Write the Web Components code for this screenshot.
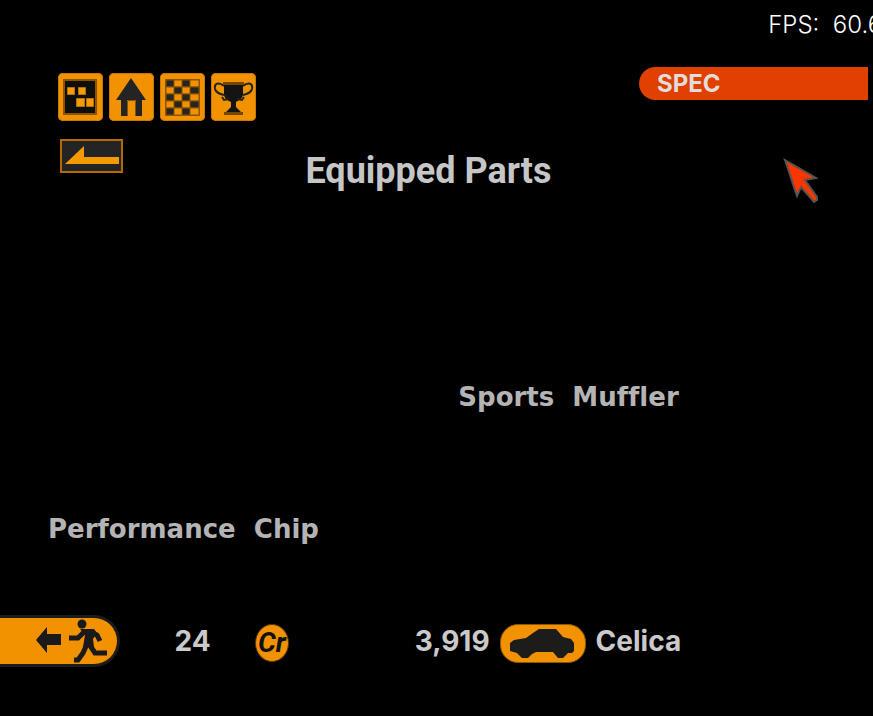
<!DOCTYPE html>
<html lang="en">
<head>
<meta charset="utf-8">
<title>Equipped Parts</title>
<style>
body { margin: 0; background: #000; color: #b4b4b4; font-family: Inter, "Liberation Sans", sans-serif; overflow: hidden; }
</style>
</head>
<body>
<parts-screen></parts-screen>
<script>
class BaseElement extends HTMLElement {
  connectedCallback() {
    if (this.shadowRoot) return;
    this.attachShadow({ mode: "open" }).innerHTML = this.render();
  }
}

const ICONS = {
  garage: `<rect x="5" y="6" width="34" height="36" fill="#8a5500"/><rect x="7" y="8" width="30" height="32" fill="#0e0e0c"/><path fill="#f59a08" stroke="#b87000" d="M9.500 14.500h7v7h-7zM20.500 14.500h7v7h-7zM18.500 25.500h8v8h-8zM28.500 25.500h7v8h-7z"/>`,
  home: `<path fill="#242424" d="M22 5 37 27H7zM12 27h6v16h-6zM27 27h6v16h-6z"/><path fill="none" stroke="#8a5500" d="M18.500 43V27.500h8V43"/>`,
  race: `<path fill="none" stroke="#8a5500" d="M5.500 6.500h34v36h-34z"/>` +
    [0,1,2,3,4].map(r => [0,1,2,3].map(c => `<rect x="${6 + c * 8}" y="${7 + r * 7}" width="9" height="7" fill="${(r + c) % 2 ? "#f29200" : "#252525"}" stroke="#8a5500" stroke-width="1"/>`).join("")).join(""),
  trophy: `<path fill="#141414" d="M13 10h19v12c-1 4-4 5-7 7v5l5 5v3H15v-3l5-5v-5c-4-2-6-3-7-7z"/><path fill="none" stroke="#242418" stroke-width="2" d="M13 13C7 8 3 11 4 16c1 4 5 5 9 6M32 13c6-5 10-2 9 3-1 4-5 5-9 6M11 24l2 3 5-1M33 24l-2 3-5-1"/><path fill="#744600" d="M12 9h21v3H12zM13 39h19v3H13z"/>`
};

customElements.define("frame-rate", class extends BaseElement {
  render() {
    return `<style>
      :host { display: block; height: 52px; line-height: 50px; font-size: 24px; font-weight: 300; color: #fff; white-space: pre; padding-left: 88%; overflow: hidden; }
    </style><slot></slot>`;
  }
});

customElements.define("nav-button", class extends BaseElement {
  render() {
    return `<style>
      :host { display: block; }
      button { display: block; width: 45px; height: 48px; padding: 0; border: 0; border-radius: 5px; background: #f29200; box-shadow: inset 0 0 0 1px #c87900; cursor: pointer; }
      svg { display: block; width: 45px; height: 48px; }
    </style><button type="button" aria-label="${this.getAttribute("label")}"><svg viewBox="0 0 45 48" aria-hidden="true">${ICONS[this.getAttribute("icon")]}</svg></button>`;
  }
});

customElements.define("section-tag", class extends BaseElement {
  render() {
    return `<style>
      :host { display: block; box-sizing: border-box; height: 33px; line-height: 33px; padding-left: 18px; border-radius: 17px 0 0 17px; background: #e04000; color: #e4dcd8; font-size: 24px; font-weight: 700; }
    </style><slot></slot>`;
  }
});

customElements.define("back-button", class extends BaseElement {
  render() {
    return `<style>
      :host { display: block; }
      button { display: block; box-sizing: border-box; width: 63px; height: 34px; padding: 0; border: 2px solid #b26b00; background: #242424; cursor: pointer; }
      svg { display: block; }
    </style><button type="button" aria-label="Back"><svg width="59" height="30" viewBox="0 0 59 30" aria-hidden="true"><path fill="#f59a00" d="M3 23 22 5v11h35v7H3z"/></svg></button>`;
  }
});

customElements.define("part-name", class extends BaseElement {
  render() {
    return `<style>
      :host { display: block; font: bold 26px/32px "DejaVu Sans", sans-serif; font-variant-ligatures: none; white-space: pre; }
    </style><slot></slot>`;
  }
});

customElements.define("exit-button", class extends BaseElement {
  render() {
    return `<style>
      :host { display: block; }
      button { display: block; box-sizing: border-box; width: 120px; height: 52px; padding: 0; border: 3px solid #1e1c1a; border-left: 0; border-radius: 0 26px 26px 0; background: #f29200; cursor: pointer; }
      svg { display: block; }
    </style><button type="button" aria-label="Exit"><svg width="117" height="46" viewBox="0 0 117 46" aria-hidden="true" fill="#1a1a1a">
      <path d="M36 22 47 9v7h14v11H47v8z"/>
      <circle cx="82" cy="6" r="4.500"/>
      <path d="M80 11h14l3 4-4 6 1 8H83l2-12z"/>
      <path fill="none" stroke="#1a1a1a" stroke-width="5" d="M69 20h9l6-6M91 14l6 3 3 6M87 26l-4 9-5 7h-4M89 26l6 9h12"/>
    </svg></button>`;
  }
});

customElements.define("credit-icon", class extends BaseElement {
  render() {
    return `<style>
      :host { display: grid; place-items: center; box-sizing: border-box; width: 34px; height: 38px; border: 1px solid #5d3800; border-radius: 50%; background: #f29200; color: #111; font: italic 700 28px/36px Roboto, "Liberation Sans", sans-serif; }
    </style><slot></slot>`;
  }
});

customElements.define("car-icon", class extends BaseElement {
  render() {
    return `<style>
      :host { display: block; }
      button { display: block; box-sizing: border-box; width: 86px; height: 39px; padding: 0; border: 1px solid #8a5500; border-radius: 18px; background: #f29200; cursor: pointer; }
      svg { display: block; }
    </style><button type="button" aria-label="Car"><svg width="84" height="37" viewBox="0 0 84 37" aria-hidden="true"><path fill="#1c1c1a" d="M9 18l4-3 12-2 7-5 6-4h17l7 8 8 2 3 4v8l-2 2h-4l-5 5h-5l-5-6H35l-4 2-4 4h-6l-5-5-7-2z"/></svg></button>`;
  }
});

customElements.define("mouse-pointer", class extends BaseElement {
  render() {
    return `<style>
      :host { position: absolute; left: 90%; top: 157px; pointer-events: none; }
      svg { display: block; margin-left: -3px; }
    </style><svg width="37" height="48" viewBox="0 0 37 48" aria-hidden="true"><path fill="#fa3600" stroke="#55534f" stroke-width="2" d="M2 3 33 21l-11 2 12 17v3l-3 2-13-15-4 9z"/></svg>`;
  }
});

customElements.define("status-bar", class extends BaseElement {
  render() {
    return `<style>
      :host { display: grid; grid-template-columns: 20% 27.500% 1fr; align-items: center; height: 52px; font-size: 28px; line-height: 32px; font-weight: 700; color: #cacaca; }
      .day { display: flex; align-items: center; gap: 44px; }
      .money { display: flex; align-items: center; gap: 10px; }
      credit-icon, car-icon { margin-top: 4px; }
    </style>
    <exit-button></exit-button>
    <div class="day"><span>24</span><credit-icon>Cr</credit-icon></div>
    <div class="money"><span>3,919</span><car-icon></car-icon><span>Celica</span></div>`;
  }
});

customElements.define("parts-screen", class extends BaseElement {
  render() {
    return `<style>
      :host { display: block; position: relative; min-height: 100vh; overflow: hidden; }
      header { display: grid; grid-template-columns: 1fr 229px; margin: 15px 5px 0 58px; }
      nav { display: flex; gap: 6px; padding-top: 6px; }
      .title { display: grid; grid-template-columns: 1fr auto 1fr; align-items: start; padding: 0 76px 0 60px; margin-top: 18px; }
      h1 { margin: 10px 0 0; font: bold 36px/44px Roboto, "Liberation Sans", sans-serif; color: #c6c6c6; }
      ul { list-style: none; margin: 0; padding: 188px 0 0; display: grid; gap: 100px; }
      .muffler { padding-left: 52.500%; }
      .chip { padding-left: 48px; }
      footer { padding-top: 70px; }
    </style>
    <frame-rate>FPS:  60.6</frame-rate>
    <header>
      <nav aria-label="Main">
        <nav-button icon="garage" label="Map"></nav-button>
        <nav-button icon="home" label="Home"></nav-button>
        <nav-button icon="race" label="Race"></nav-button>
        <nav-button icon="trophy" label="Trophies"></nav-button>
      </nav>
      <section-tag>SPEC</section-tag>
    </header>
    <main>
      <div class="title"><back-button></back-button><h1>Equipped Parts</h1></div>
      <ul>
        <li class="muffler"><part-name>Sports  Muffler</part-name></li>
        <li class="chip"><part-name>Performance  Chip</part-name></li>
      </ul>
    </main>
    <footer><status-bar></status-bar></footer>
    <mouse-pointer></mouse-pointer>`;
  }
});
</script>
</body>
</html>
